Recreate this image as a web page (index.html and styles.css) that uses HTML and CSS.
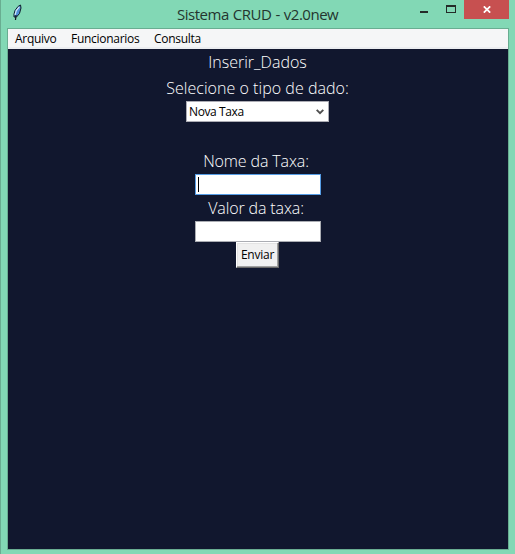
FILE: index.html
```html
<!DOCTYPE html>
<html lang="pt-BR">
<head>
<meta charset="utf-8">
<title>Sistema CRUD - v2.0new</title>
<link rel="stylesheet" href="styles.css">
</head>
<body>
<div class="window">
  <header class="titlebar">
    <svg class="feather" width="9" height="17" viewBox="0 0 9 17">
      <path d="M7.500 1 5 2.500 2 6.500 1 10v3h2.500L6.500 9.500 8 4z" fill="#4f8fd8" stroke="#10202b" stroke-width="1"/>
      <path d="M6.300 2.800 3.300 6.500 2 11" fill="none" stroke="#d5eafa" stroke-width="1.200"/>
      <path d="M3 11 2.500 16" fill="none" stroke="#10151f" stroke-width="1.200"/>
    </svg>
    <h1 class="title"><span>Sistema CRUD - v2.0new</span></h1>
    <div class="controls">
      <svg class="minimize" width="8" height="2"><path d="M0 0h8v2H0z" fill="#242b28"/></svg>
      <svg class="maximize" width="10" height="8"><path fill="#242b28" fill-rule="evenodd" d="M0 0h10v8H0zM1 2v5h8V2z"/></svg>
      <div class="close"><svg width="8" height="7" viewBox="0 0 8 7"><path d="M.8.3 7.200 6.700M7.200.3.8 6.700" stroke="#fff" stroke-width="1.700"/></svg></div>
    </div>
  </header>
  <div class="client">
    <nav class="menu"><span class="arquivo">Arquivo</span><span class="funcionarios">Funcionarios</span><span class="consulta">Consulta</span></nav>
    <main class="form">
      <div class="label heading"><span>Inserir_Dados</span></div>
      <div class="label kind"><span>Selecione o tipo de dado:</span></div>
      <div class="select"><span>Nova Taxa</span><svg width="8" height="6" viewBox="0 0 8 6"><path d="M.7.8 4 4.200 7.300.8" fill="none" stroke="#505050" stroke-width="1.900"/></svg></div>
      <div class="label name"><span>Nome da Taxa:</span></div>
      <div class="input focused"><i class="caret"></i></div>
      <div class="label value"><span>Valor da taxa:</span></div>
      <div class="input"></div>
      <div class="button"><span>Enviar</span></div>
    </main>
  </div>
</div>
</body>
</html>
```
FILE: styles.css
```css
* { box-sizing: border-box; }
body { margin: 0; overflow: hidden; }
span { white-space: nowrap; }
svg { display: block; flex: none; }
.window {
  width: 515px;
  height: 554px;
  padding-left: 6px;
  background: #82d8b5;
  border-left: 1px solid #69ad91;
  font-family: "Open Sans", "Noto Sans", sans-serif;
}
.titlebar { height: 28px; display: flex; }
.feather { margin: 4px 0 0 6px; }
.title {
  flex: 1;
  margin: 0;
  padding-left: 155px;
  font-size: 15px;
  line-height: 28px;
  font-weight: 400;
  letter-spacing: -0.480px;
  word-spacing: 0.600px;
  color: #24352f;
}
.controls { display: flex; width: 89px; margin-right: 6px; }
.minimize { margin: 11px 0 0 0; }
.maximize { margin: 5px 0 0 18px; }
.close {
  width: 45px;
  height: 19px;
  margin-left: 8px;
  background: #c75050;
  display: flex;
  justify-content: center;
  padding-top: 6px;
}
.client {
  width: 502px;
  height: 522px;
  border: 1px solid #69ad91;
  background: #11172e;
}
.menu {
  height: 20px;
  display: flex;
  gap: 14.500px;
  padding-left: 7px;
  background: #f5f6f7;
  border-bottom: 2px solid #ebedf0;
  font-size: 12px;
  line-height: 19px;
  letter-spacing: -0.280px;
  color: #000;
}
.form {
  display: flex;
  flex-direction: column;
  align-items: center;
  padding-right: 1px;
}
.label {
  height: 26px;
  font-size: 16px;
  font-weight: 300;
  line-height: 26px;
  color: #fff;
}
.kind { letter-spacing: 0.040px; }
.select {
  width: 143px;
  height: 21px;
  background: #fff;
  border: 1px solid #acacb4;
  display: flex;
  align-items: center;
  justify-content: space-between;
  padding: 0 4px 0 2px;
  font-size: 12px;
  font-weight: 500;
  letter-spacing: -0.400px;
  line-height: 19px;
}
.name { margin-top: 26px; }
.name, .value { letter-spacing: -0.120px; padding-right: 3px; }
.input {
  width: 126px;
  height: 21px;
  background: #fff;
  border: 1px solid #abadb3;
  padding: 2px;
}
.focused { border-color: #569de5; }
.caret { display: block; width: 1px; height: 15px; background: #000; }
.button {
  width: 43px;
  height: 26px;
  background: #f0f0f0;
  border: 1px solid;
  border-color: #fff #696969 #696969 #fff;
  box-shadow: inset -1px -1px #a0a0a0, inset 1px 1px #e3e3e3;
  text-align: center;
  font-size: 12px;
  letter-spacing: -0.250px;
  line-height: 24px;
}
```
